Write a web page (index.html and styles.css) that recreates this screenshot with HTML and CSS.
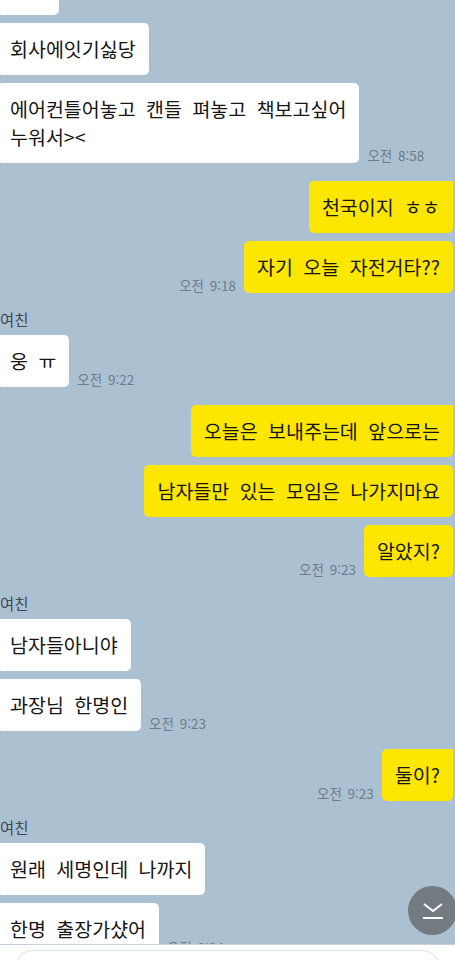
FILE: index.html
```html
<!DOCTYPE html>
<html lang="ko">

<head>
    <meta charset="UTF-8">
    <title>여친</title>
    <link rel="stylesheet" href="styles.css">
</head>

<body>
    <div class="screen">
        <div class="chat">
            <!-- 상대방 -->
            <div class="group them">
                <div class="row"><p class="bubble">웅웅</p></div>
                <div class="row"><p class="bubble">회사에잇기싫당</p></div>
                <div class="row"><p class="bubble">에어컨틀어놓고 캔들 펴놓고 책보고싶어<br>누워서&gt;&lt;</p><span class="time">오전 8:58</span></div>
            </div>

            <!-- 나 -->
            <div class="group me">
                <div class="row"><p class="bubble first">천국이지 ㅎㅎ</p></div>
                <div class="row"><span class="time">오전 9:18</span><p class="bubble">자기 오늘 자전거타??</p></div>
            </div>

            <div class="group them">
                <div class="name">여친</div>
                <div class="row"><p class="bubble first">웅 ㅠ</p><span class="time">오전 9:22</span></div>
            </div>

            <div class="group me">
                <div class="row"><p class="bubble first">오늘은 보내주는데 앞으로는</p></div>
                <div class="row"><p class="bubble">남자들만 있는 모임은 나가지마요</p></div>
                <div class="row"><span class="time">오전 9:23</span><p class="bubble">알았지?</p></div>
            </div>

            <div class="group them">
                <div class="name">여친</div>
                <div class="row"><p class="bubble first">남자들아니야</p></div>
                <div class="row"><p class="bubble">과장님 한명인</p><span class="time">오전 9:23</span></div>
            </div>

            <div class="group me">
                <div class="row"><span class="time">오전 9:23</span><p class="bubble first">둘이?</p></div>
            </div>

            <div class="group them">
                <div class="name">여친</div>
                <div class="row"><p class="bubble first">원래 세명인데 나까지</p></div>
                <div class="row"><p class="bubble">한명 출장가샸어</p><span class="time">오전 9:24</span></div>
            </div>
        </div>

        <!-- 맨 아래로 버튼 -->
        <div class="btn-down">
            <svg width="22" height="18" viewBox="0 0 22 18">
                <polyline points="2,2 11,9 20,2" fill="none" stroke="#fff" stroke-width="2"/>
                <line x1="1" y1="16" x2="21" y2="16" stroke="#fff" stroke-width="2"/>
            </svg>
        </div>

        <div class="input-bar">
            <div class="input"></div>
        </div>
    </div>
</body>

</html>
```

FILE: styles.css
```css
body{margin:0;background:#abc1d1;}
p{margin:0;}

.screen {
    position: relative;
    height: 960px;
    overflow: hidden;
    font-family: "Noto Sans CJK KR", "Noto Sans", sans-serif;
    color: #161616;
}

.chat {
    margin-top: -37px;
    padding-right: 2px;
}

.group{display:flex;flex-direction:column;gap:8px;}
.group + .group{margin-top:18px;}
.group.me{align-items:flex-end;}
.group.them{align-items:flex-start;}

.row{display:flex;align-items:flex-end;gap:8px;}

.bubble {
    padding: 12px 13px;
    font-size: 19.5px;
    line-height: 28px;
    word-spacing: 5px;
    border-radius: 5px;
    background: #fff;
}
.them .bubble{margin-left:-3px;}
.me .bubble{background:#fde600;}
.me .bubble.first{border-top-right-radius:0;}
.them .bubble.first{border-top-left-radius:0;}

.time {
    font-size: 13.5px;
    line-height: 16px;
    word-spacing: 2px;
    color: #6c7c8b;
    white-space: nowrap;
}

.name {
    font-size: 15.5px;
    line-height: 16px;
    color: #3f4851;
}

.btn-down {
    position: absolute;
    top: 886px;
    left: 408px;
    width: 49px;
    height: 49px;
    border-radius: 50%;
    background: #737a80;
    display: flex;
    align-items: center;
    justify-content: center;
}

.input-bar {
    position: absolute;
    left: 0;
    right: 0;
    bottom: 0;
    height: 10px;
    padding: 5px 15px 0;
    background: #fff;
    border-top: 1px solid #c4d2dd;
}
.input {
    height: 40px;
    border: 1px solid #dcdcdc;
    border-radius: 18px;
}
```
